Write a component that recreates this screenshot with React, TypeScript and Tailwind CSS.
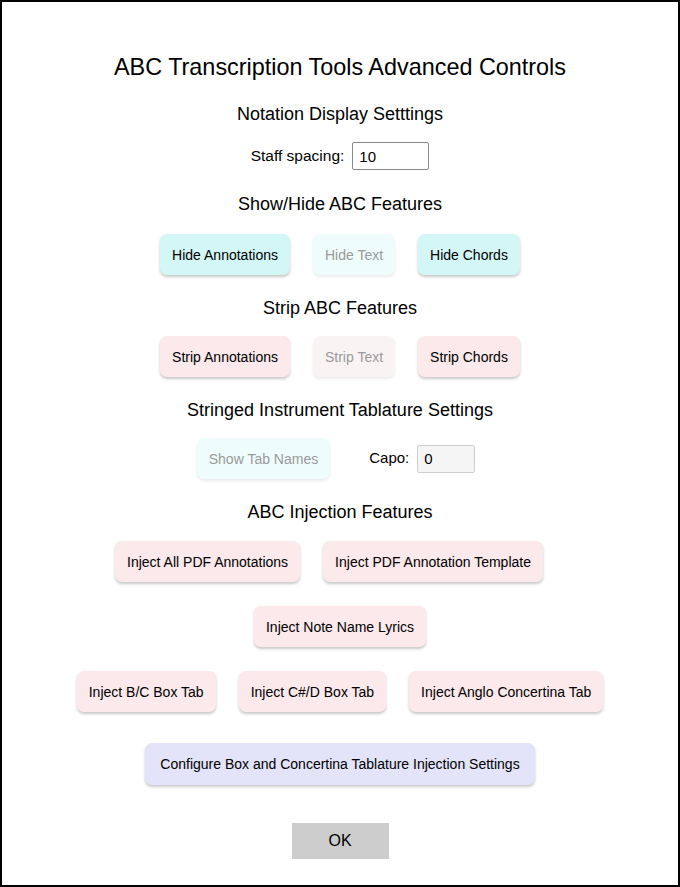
const font = { fontFamily: '"Liberation Sans", Arial, sans-serif' };

type Tone = "cyan" | "pink" | "lavender";

const tones: Record<Tone, { on: string; off: string }> = {
  cyan: { on: "bg-[#d3f7f7]", off: "bg-[#effcfc]" },
  pink: { on: "bg-[#fbe9eb]", off: "bg-[#faf3f4]" },
  lavender: { on: "bg-[#e3e3f9]", off: "bg-[#f1f1fc]" },
};

function Btn({
  label,
  tone,
  disabled,
  className = "",
}: {
  label: string;
  tone: Tone;
  disabled?: boolean;
  className?: string;
}) {
  return (
    <button
      disabled={disabled}
      className={`h-[41px] px-3 rounded-[7px] text-[14px] leading-none ${
        disabled
          ? `${tones[tone].off} text-[#9a9a9a] shadow-[0_2px_3px_rgba(0,0,0,0.08)]`
          : `${tones[tone].on} text-black shadow-[0_2px_3px_rgba(0,0,0,0.22)]`
      } ${className}`}
    >
      {label}
    </button>
  );
}

function Heading({ children, className = "" }: { children: React.ReactNode; className?: string }) {
  return <h2 className={`text-[18px] leading-[22px] text-black ${className}`}>{children}</h2>;
}

export default function App() {
  return (
    <div style={font} className="w-[680px] h-[887px] bg-white border-2 border-black flex flex-col items-center pt-[52px]">
      <h1 className="text-[23.4px] leading-[26px] text-black">ABC Transcription Tools Advanced Controls</h1>

      {/* notation display */}
      <Heading className="mt-[23px]">Notation Display Setttings</Heading>
      <div className="mt-[17px] flex items-center gap-2">
        <span className="text-[15.5px] text-black">Staff spacing:</span>
        <input
          defaultValue="10"
          className="w-[77px] h-[28px] border border-[#8a8a8a] rounded-[2px] px-[6px] text-[15px] text-black bg-white"
        />
      </div>

      {/* show / hide */}
      <Heading className="mt-[23px]">Show/Hide ABC Features</Heading>
      <div className="mt-[19px] flex gap-[23px]">
        <Btn label="Hide Annotations" tone="cyan" />
        <Btn label="Hide Text" tone="cyan" disabled />
        <Btn label="Hide Chords" tone="cyan" />
      </div>

      {/* strip */}
      <Heading className="mt-[22px]">Strip ABC Features</Heading>
      <div className="mt-[17px] flex gap-[23px]">
        <Btn label="Strip Annotations" tone="pink" />
        <Btn label="Strip Text" tone="pink" disabled />
        <Btn label="Strip Chords" tone="pink" />
      </div>

      {/* tablature */}
      <Heading className="mt-[22px]">Stringed Instrument Tablature Settings</Heading>
      <div className="mt-[17px] flex items-center pr-[8px]">
        <Btn label="Show Tab Names" tone="cyan" disabled />
        <span className="ml-[39px] text-[15px] text-black">Capo:</span>
        <input
          defaultValue="0"
          className="ml-2 w-[58px] h-[28px] border border-[#cfcfcf] rounded-[2px] px-[6px] text-[15px] text-black bg-[#f5f5f5]"
        />
      </div>

      {/* injection */}
      <Heading className="mt-[22px]">ABC Injection Features</Heading>
      <div className="mt-[18px] flex gap-[23px] pr-[22px]">
        <Btn label="Inject All PDF Annotations" tone="pink" />
        <Btn label="Inject PDF Annotation Template" tone="pink" />
      </div>
      <div className="mt-[24px] flex">
        <Btn label="Inject Note Name Lyrics" tone="pink" className="h-[40px]" />
      </div>
      <div className="mt-[24px] flex gap-[23px]">
        <Btn label="Inject B/C Box Tab" tone="pink" />
        <Btn label="Inject C#/D Box Tab" tone="pink" />
        <Btn label="Inject Anglo Concertina Tab" tone="pink" />
      </div>
      <div className="mt-[31px] flex">
        <Btn label="Configure Box and Concertina Tablature Injection Settings" tone="lavender" className="h-[42px] px-[15px]" />
      </div>

      <button className="mt-[38px] w-[97px] h-[36px] bg-[#cccccc] text-[16px] text-black">OK</button>
    </div>
  );
}
